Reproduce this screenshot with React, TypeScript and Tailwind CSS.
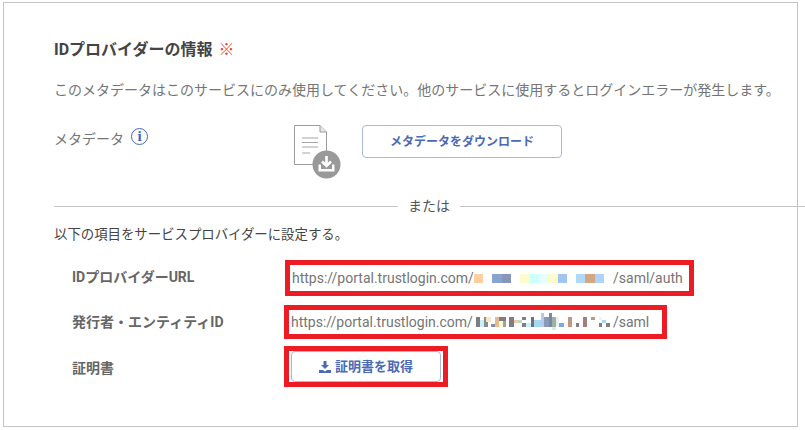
import React from "react";

const font = { fontFamily: '"Roboto","Noto Sans CJK JP",sans-serif' };

const row1: (string | null)[] = ["#fecfa0", null, "#85a5cf", "#8795bb", null, "#fdfdcc", "#ccffff", "#e5ffff", "#fdfdcc", "#a0c6f0", null, "#b0d8fb", "#d3a782", "#aed2fb"];

function Mosaic() {
  return (
    <span className="inline-flex mr-[9px]">
      {row1.map((c, i) => (
        <span key={i} className="block w-[9.3px] h-[9px]" style={{ background: c ?? "transparent" }} />
      ))}
    </span>
  );
}

const cells: [number, number, number, number, string][] = [
  [2, 4, 4, 10, "#7d7d7d"], [6, 7, 5, 7, "#c8f0f8"], [10, 4, 4, 10, "#8a8a90"], [12, 4, 5, 5, "#fde4c0"], [17, 11, 4, 3, "#7f8fb0"],
  [21, 4, 4, 10, "#e8b890"], [25, 4, 7, 4, "#7e7e7e"], [25, 8, 4, 6, "#fdfdd0"], [29, 8, 3, 6, "#a0a0a0"], [35, 4, 5, 10, "#7e7e7e"],
  [40, 7, 4, 3, "#f8c8a0"], [44, 7, 4, 3, "#b8dcc8"], [48, 4, 4, 3, "#808080"], [48, 10, 4, 4, "#808080"], [52, 10, 5, 4, "#c8f0f8"],
  [57, 4, 3, 10, "#707080"], [60, 7, 7, 7, "#a8d8f0"], [67, 0, 3, 14, "#bcc8e8"], [70, 4, 5, 10, "#8a9ab8"], [75, 0, 3, 14, "#7888a8"],
  [78, 4, 4, 10, "#a0b0a0"], [78, 14, 4, 3, "#c8f0f8"], [82, 4, 3, 10, "#e8f0f0"], [85, 10, 5, 4, "#80a8e0"], [94, 4, 4, 10, "#c09880"],
  [102, 10, 3, 4, "#808080"], [109, 4, 4, 10, "#a08078"], [117, 4, 4, 3, "#c09878"], [125, 4, 3, 3, "#e0f8ff"], [128, 7, 4, 3, "#a8d8f8"],
  [125, 10, 3, 4, "#808080"], [132, 10, 4, 4, "#808080"],
];

function Mosaic2() {
  return (
    <svg width="139" height="18" viewBox="0 0 139 18" className="block shrink-0 ml-[1px]">
      {cells.map(([x, y, w, h, c], i) => (
        <rect key={i} x={x} y={y} width={w} height={h} fill={c} />
      ))}
    </svg>
  );
}

function FileIcon() {
  return (
    <svg width="48" height="56" viewBox="0 0 48 56" className="shrink-0">
      <path d="M0.5 0.5H26L32.5 7V39.5H0.5Z" fill="#fff" stroke="#9b9b9b" />
      <path d="M26 0.5V7H32.5" fill="#e5e5e5" stroke="#9b9b9b" />
      <path d="M8 13H24M8 17.5H24M8 22H24M8 28H16" stroke="#a5a5a5" />
      <circle cx="32.5" cy="39.5" r="14" fill="#999" />
      <path d="M32.5 31V40.5M28 36.5L32.5 41L37 36.5" fill="none" stroke="#fff" strokeWidth="2.6" />
      <path d="M24.5 39.5V46.5H40.5V39.5H38V44H27V39.5Z" fill="#fff" />
    </svg>
  );
}

export default function App() {
  return (
    <div className="w-[805px] h-[430px] bg-white pl-[3px] pt-[2px] overflow-hidden" style={font}>
      <div className="w-[795px] h-[425px] border border-[#c4c4c4] pl-[50px] pt-[35px]">
        <h2 className="text-[16px] leading-6 font-bold text-[#444]">
          IDプロバイダーの情報 <span className="ml-[2px] font-normal text-[#e8483f]">※</span>
        </h2>
        <p className="mt-[16px] text-[14px] leading-6 text-[#757575] whitespace-nowrap">
          このメタデータはこのサービスにのみ使用してください。他のサービスに使用するとログインエラーが発生します。
        </p>
        <div className="flex mt-[23px] h-[67px]">
          <div className="w-[240px] flex items-start gap-[7px] pt-[2px] text-[14px] leading-6 text-[#757575]">
            メタデータ
            <span className="mt-[1px] w-[17px] h-[17px] rounded-full border border-[#4466bb] text-[#4466bb] flex items-center justify-center font-['Liberation_Serif'] font-bold text-[15px] leading-none">
              i
            </span>
          </div>
          <FileIcon />
          <button className="ml-[20px] w-[200px] h-[33px] rounded border border-[#a9b9dc] text-[12px] font-bold text-[#4a6ab5]">
            メタデータをダウンロード
          </button>
        </div>
        <div className="flex items-center w-[751px] mt-[6px] h-4">
          <div className="w-[344px] h-px bg-[#c4c4c4]" />
          <span className="px-[10px] text-[14px] leading-4 text-[#555] whitespace-nowrap">または</span>
          <div className="w-[345px] h-px bg-[#c4c4c4]" />
        </div>
        <p className="mt-[11px] text-[13.4px] leading-5 text-[#444]">以下の項目をサービスプロバイダーに設定する。</p>

        <div className="mt-[11px] flex items-center h-[44px]">
          <div className="w-[231px] pl-[18px] pb-[2px] text-[14px] font-bold text-[#666]">IDプロバイダーURL</div>
          <div className="w-[409px] h-[36px] border-[5px] border-[#ed1c24] flex items-center pl-[2px] text-[14px] text-[#757575] whitespace-nowrap">
            https://portal.trustlogin.com/<Mosaic />/saml/auth
          </div>
        </div>
        <div className="flex items-center h-[44px]">
          <div className="w-[230px] pl-[18px] text-[14px] font-bold text-[#666]">発行者・エンティティID</div>
          <div className="w-[383px] h-[34px] border-[5px] border-[#ed1c24] flex items-center pl-[2px] text-[14px] text-[#757575] whitespace-nowrap">
            https://portal.trustlogin.com/<Mosaic2 />/saml
          </div>
        </div>
        <div className="flex items-center h-[45px]">
          <div className="w-[230px] pl-[18px] pt-[4px] text-[14px] font-bold text-[#666]">証明書</div>
          <div className="w-[164px] h-[41px] border-[5px] border-[#ed1c24] flex items-center justify-center">
            <button className="w-[150px] h-[31px] rounded border border-[#a9b9dc] flex items-center justify-center gap-[4px] text-[13px] font-bold text-[#4a6ab5]">
              <svg width="12" height="12" viewBox="0 0 12 12"><path d="M4.5 0H7.5V4H10L6 8L2 4H4.5ZM0 9H4L6 10.5L8 9H12V12H0Z" fill="#4a6ab5" /></svg>
              証明書を取得
            </button>
          </div>
        </div>
      </div>
    </div>
  );
}
